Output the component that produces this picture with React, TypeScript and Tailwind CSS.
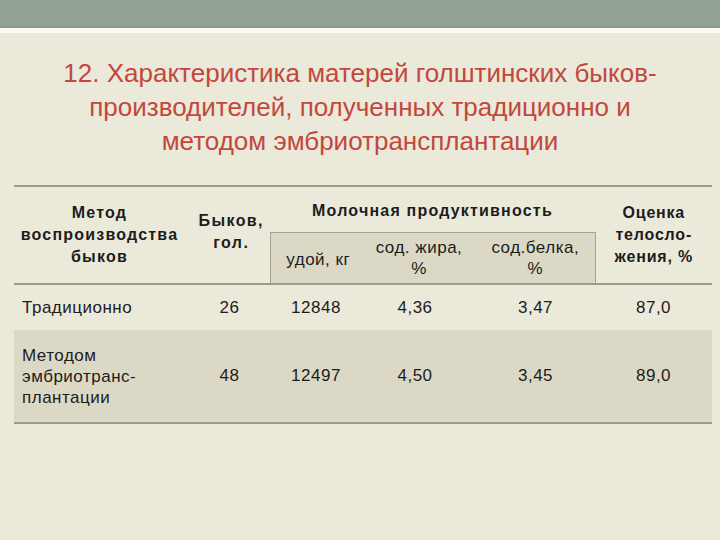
const cell = "font-['Liberation_Sans',Arial,sans-serif]";

const rows = [
  { method: ["Традиционно"], heads: "26", milk: "12848", fat: "4,36", protein: "3,47", score: "87,0", dark: false },
  {
    method: ["Методом", "эмбриотранс-", "плантации"],
    heads: "48",
    milk: "12497",
    fat: "4,50",
    protein: "3,45",
    score: "89,0",
    dark: true,
  },
];

export default function App() {
  return (
    <div className={`w-[720px] h-[540px] bg-[#ebe9da] overflow-hidden ${cell}`}>
      <div className="h-[26px] bg-[#93a195]" />
      <div className="h-[2px] bg-[#8a978c]" />
      <div className="h-[5px] bg-[#fbfaf3]" />

      <h1 className="mt-[23px] text-center text-[26px] leading-[34px] tracking-[0px] text-[#c2483c]">
        12. Характеристика матерей голштинских быков-
        <br />
        производителей, полученных традиционно и
        <br />
        методом эмбриотрансплантации
      </h1>

      <table className="mt-[27px] ml-[14px] w-[698px] border-collapse table-fixed text-[#1c1c1c]">
        <colgroup>
          <col className="w-[171px]" />
          <col className="w-[85px]" />
          <col className="w-[90px]" />
          <col className="w-[110px]" />
          <col className="w-[125px]" />
          <col className="w-[117px]" />
        </colgroup>
        <thead>
          <tr className="h-[46px] border-t-2 border-[#9c9a88]">
            <th rowSpan={2} className="text-[16px] leading-[22px] font-bold tracking-[1.2px] align-middle">
              Метод
              <br />
              воспроизводства
              <br />
              быков
            </th>
            <th rowSpan={2} className="text-[16px] leading-[22px] font-bold tracking-[1.4px] align-middle pb-[6px] pl-[8px]">
              Быков,
              <br />
              гол.
            </th>
            <th colSpan={3} className="text-[16px] font-bold tracking-[1.2px] align-top pt-[12px]">
              Молочная продуктивность
            </th>
            <th rowSpan={2} className="text-[16px] leading-[22px] font-bold tracking-[0.8px] align-middle">
              Оценка
              <br />
              телосло-
              <br />
              жения, %
            </th>
          </tr>
          <tr className="h-[52px] border-b-2 border-[#9c9a88]">
            <th className="bg-[#dcd8c6] border-t border-l border-[#a5a391] font-normal text-[17px] tracking-[0.5px] align-middle pt-[4px] pl-[6px]">
              удой, кг
            </th>
            <th className="bg-[#dcd8c6] border-t border-[#a5a391] font-normal text-[17px] tracking-[0.5px] leading-[21px] align-middle pl-[8px]">
              сод. жира,
              <br />%
            </th>
            <th className="bg-[#dcd8c6] border-t border-r border-[#a5a391] font-normal text-[17px] tracking-[0.5px] leading-[21px] align-middle pl-[6px]">
              сод.белка,
              <br />%
            </th>
          </tr>
        </thead>
        <tbody>
          {rows.map((r) => (
            <tr
              key={r.heads}
              className={`${r.dark ? "h-[93px] bg-[#dcd8c6] border-b-2 border-[#9c9a88]" : "h-[46px]"} text-[17px] tracking-[0.5px]`}
            >
              <td className="pl-[8px] leading-[21px]">
                {r.method.map((m) => (
                  <div key={m}>{m}</div>
                ))}
              </td>
              <td className="text-center pl-[4px]">{r.heads}</td>
              <td className="text-center pl-[2px]">{r.milk}</td>
              <td className="text-center">{r.fat}</td>
              <td className="text-center pl-[6px]">{r.protein}</td>
              <td className="text-center">{r.score}</td>
            </tr>
          ))}
        </tbody>
      </table>
    </div>
  );
}
